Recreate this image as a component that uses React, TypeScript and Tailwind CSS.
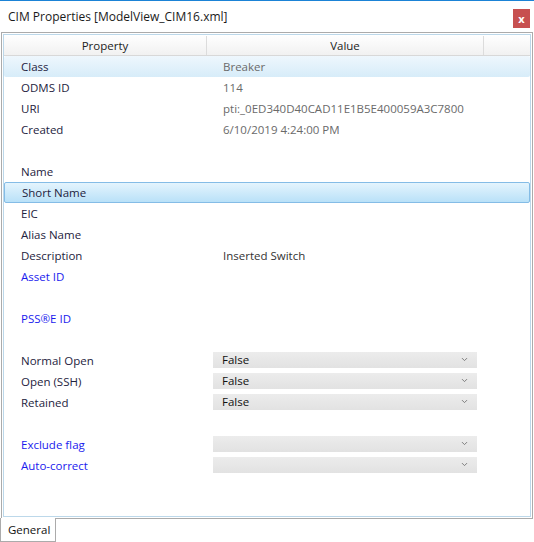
import { ChevronDown } from 'lucide-react';

type Row = {
  label?: string;
  value?: string;
  blue?: boolean;
  select?: boolean;
  selected?: 'soft' | 'strong';
  dim?: boolean;
};

const rows: Row[] = [
  { label: 'Class', value: 'Breaker', dim: true, selected: 'soft' },
  { label: 'ODMS ID', value: '114', dim: true },
  { label: 'URI', value: 'pti:_0ED340D40CAD11E1B5E400059A3C7800', dim: true },
  { label: 'Created', value: '6/10/2019 4:24:00 PM', dim: true },
  {},
  { label: 'Name' },
  { label: 'Short Name', selected: 'strong' },
  { label: 'EIC' },
  { label: 'Alias Name' },
  { label: 'Description', value: 'Inserted Switch' },
  { label: 'Asset ID', blue: true },
  {},
  { label: 'PSS®E ID', blue: true },
  {},
  { label: 'Normal Open', value: 'False', select: true },
  { label: 'Open (SSH)', value: 'False', select: true },
  { label: 'Retained', value: 'False', select: true },
  {},
  { label: 'Exclude flag', value: '', select: true, blue: true },
  { label: 'Auto-correct', value: '', select: true, blue: true },
];

function PropertyRow({ row }: { row: Row }) {
  let rowClass = 'h-[21px] flex items-center relative';
  if (row.selected === 'soft') {
    rowClass += ' bg-gradient-to-b from-[#eef7fd] to-[#d7ecf9] rounded-[2px]';
  }
  if (row.selected === 'strong') {
    rowClass +=
      ' bg-gradient-to-b from-[#e4f4fd] to-[#b9e1f8] border border-[#84bce6] rounded-[2px]';
  }

  return (
    <div className={rowClass}>
      <div
        className={
          'w-[209px] pl-[17px] shrink-0 ' +
          (row.blue ? 'text-[#1a1aee]' : 'text-[#1e2340]')
        }
      >
        {row.label}
      </div>
      {row.select ? (
        <div className="w-[264px] h-[16px] mt-[-2px] bg-gradient-to-b from-[#ececec] to-[#e2e2e2] flex items-center pl-[9px] pr-[8px] text-[#111]">
          <span className="flex-1">{row.value}</span>
          <ChevronDown size={9} strokeWidth={2.5} className="text-[#777]" />
        </div>
      ) : (
        <div
          className={
            'pl-[10px] ' + (row.dim ? 'text-[#6a6a6a]' : 'text-[#333]')
          }
        >
          {row.value}
        </div>
      )}
    </div>
  );
}

export default function App() {
  return (
    <div
      className="w-[534px] h-[542px] bg-white border-t border-[#1b83d6] overflow-hidden text-[11.5px] leading-none"
      style={{ fontFamily: '"Segoe UI", "Open Sans", "Noto Sans", sans-serif' }}
    >
      <div className="h-[31px] flex items-center justify-between pl-[8px] pr-[4px]">
        <span className="text-[#1a1a1a] text-[12px] mt-[1px]">
          CIM Properties [ModelView_CIM16.xml]
        </span>
        <div className="w-[17px] h-[19px] mt-[3px] bg-[#c75050] text-white text-[11px] font-bold flex items-center justify-center">
          x
        </div>
      </div>

      <div className="mx-[1px] border border-[#ababab] p-[1px] h-[487px]">
        <div className="border border-[#bcd8ea] h-full">
          <div className="h-[21px] pt-[1px] flex bg-gradient-to-b from-white to-[#f1f1f1] border-b border-[#d8d8d8] text-[#222]">
            <div className="w-[203px] border-r border-[#dcdcdc] flex items-center justify-center">
              Property
            </div>
            <div className="w-[277px] border-r border-[#dcdcdc] flex items-center justify-center">
              Value
            </div>
            <div className="flex-1" />
          </div>
          <div>
            {rows.map((r, i) => (
              <PropertyRow key={i} row={r} />
            ))}
          </div>
        </div>
      </div>

      <div className="w-[56px] h-[24px] border-l border-r border-b border-[#ababab] mt-[-1px] bg-white relative flex items-center pl-[7px] pt-[1px] text-[#111]">
        General
      </div>
    </div>
  );
}
